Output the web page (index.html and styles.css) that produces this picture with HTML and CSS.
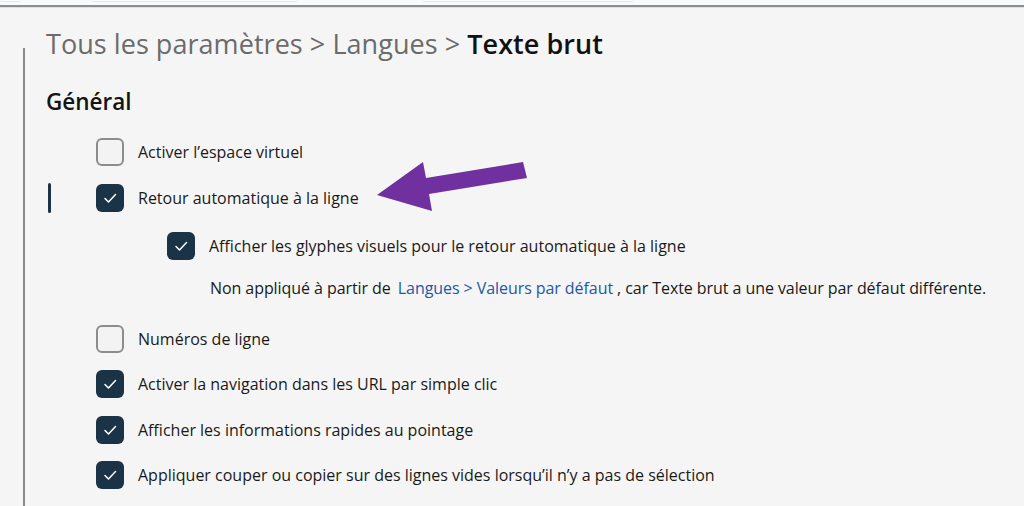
FILE: index.html
```html
<!DOCTYPE html>
<html lang="fr">
<head>
<meta charset="utf-8">
<title>Texte brut</title>
<link rel="stylesheet" href="styles.css">
</head>
<body>
<div class="topbar">
  <span class="tab tab-a"></span>
  <span class="tab tab-b"></span>
  <span class="tab tab-c"></span>
</div>
<div class="page">
  <div class="rail"></div>
  <div class="content">
    <h1 class="crumb"><span class="crumb-muted">Tous les paramètres &gt; Langues &gt; </span><span class="crumb-current">Texte brut</span></h1>
    <h2 class="section">Général</h2>
    <div class="options">
      <div class="row">
        <span class="box"></span>
        <span class="label">Activer l’espace virtuel</span>
      </div>
      <div class="row row-selected">
        <span class="indicator"></span>
        <span class="box checked"><svg viewBox="0 0 28 28"><path d="M9 14.5 L12.5 18 L19.5 10.5"/></svg></span>
        <span class="label">Retour automatique à la ligne</span>
      </div>
      <div class="row row-sub">
        <span class="box checked"><svg viewBox="0 0 28 28"><path d="M9 14.5 L12.5 18 L19.5 10.5"/></svg></span>
        <span class="label">Afficher les glyphes visuels pour le retour automatique à la ligne</span>
      </div>
      <p class="note">Non appliqué à partir de <a class="link">Langues &gt; Valeurs par défaut</a> , car Texte brut a une valeur par défaut différente.</p>
      <div class="row row-tight">
        <span class="box"></span>
        <span class="label">Numéros de ligne</span>
      </div>
      <div class="row row-tight">
        <span class="box checked"><svg viewBox="0 0 28 28"><path d="M9 14.5 L12.5 18 L19.5 10.5"/></svg></span>
        <span class="label">Activer la navigation dans les URL par simple clic</span>
      </div>
      <div class="row row-tight">
        <span class="box checked"><svg viewBox="0 0 28 28"><path d="M9 14.5 L12.5 18 L19.5 10.5"/></svg></span>
        <span class="label">Afficher les informations rapides au pointage</span>
      </div>
      <div class="row row-tight">
        <span class="box checked"><svg viewBox="0 0 28 28"><path d="M9 14.5 L12.5 18 L19.5 10.5"/></svg></span>
        <span class="label">Appliquer couper ou copier sur des lignes vides lorsqu’il n’y a pas de sélection</span>
      </div>
    </div>
  </div>
  <svg class="arrow" viewBox="0 0 1024 506" width="1024" height="506">
    <polygon points="377,197 423,164 426,180 523,164 527,180 429,196 432,213"/>
  </svg>
</div>
</body>
</html>
```

FILE: styles.css
```css
* { box-sizing: border-box; }
html, body {
  margin: 0;
  padding: 0;
  background: #f5f5f5;
  font-family: "Open Sans", "Noto Sans", "Liberation Sans", sans-serif;
  color: #1a1a1a;
  overflow: hidden;
}
.topbar {
  height: 7px;
  background: #f8fafc;
  border-bottom: 2px solid #8d8d8d;
  box-shadow: 0 1px 0 #e0e0e0;
  display: flex;
  align-items: flex-start;
}
.tab {
  display: block;
  height: 2px;
  border-bottom: 1px solid #e4e6e8;
  border-radius: 0 0 4px 4px;
  background: #fcfdfe;
}
.tab-a { width: 21px; }
.tab-b { width: 206px; margin-left: 71px; }
.tab-c { width: 210px; margin-left: 125px; }
.page {
  position: relative;
  display: flex;
  height: 499px;
}
.rail {
  width: 2px;
  margin-left: 23px;
  margin-top: 41px;
  background: #8a8a8a;
  flex: none;
}
.content {
  padding-left: 21px;
  flex: 1;
}
.crumb {
  margin: 0;
  padding-top: 21px;
  font-size: 27px;
  line-height: 32px;
  font-weight: 400;
  letter-spacing: 0.05px;
}
.crumb-muted { color: #6b6b6b; }
.crumb-current { color: #111; font-weight: 600; }
.section {
  margin: 27px 0 0 0;
  font-size: 22.5px;
  line-height: 30px;
  font-weight: 600;
  color: #141414;
}
.options {
  margin-top: 12px;
  padding-left: 50px;
  display: flex;
  flex-direction: column;
}
.row {
  position: relative;
  display: flex;
  align-items: center;
  height: 46px;
  gap: 14px;
}
.row-sub {
  margin-left: 71px;
  margin-top: 2px;
}
.row-tight { height: 45.5px; }
.indicator {
  position: absolute;
  left: -48px;
  top: 8px;
  width: 3px;
  height: 30px;
  border-radius: 2px;
  background: #1b3347;
}
.box {
  flex: none;
  width: 28px;
  height: 28px;
  border-radius: 6px;
  border: 2px solid #8c8c8c;
  background: #f3f3f3;
  display: flex;
}
.box.checked {
  border: none;
  background: #1b3347;
}
.box svg {
  width: 28px;
  height: 28px;
  fill: none;
  stroke: #ffffff;
  stroke-width: 1.5;
  stroke-linecap: round;
  stroke-linejoin: round;
}
.label {
  font-size: 16px;
  white-space: nowrap;
}
.note {
  margin: 0 0 9px 114px;
  height: 38px;
  line-height: 38px;
  font-size: 16px;
  letter-spacing: -0.07px;
  white-space: nowrap;
}
.link {
  color: #2457a6;
  margin-left: 3px;
}
.arrow {
  position: absolute;
  left: 0;
  top: -9px;
  fill: #7030a0;
  pointer-events: none;
}
```
